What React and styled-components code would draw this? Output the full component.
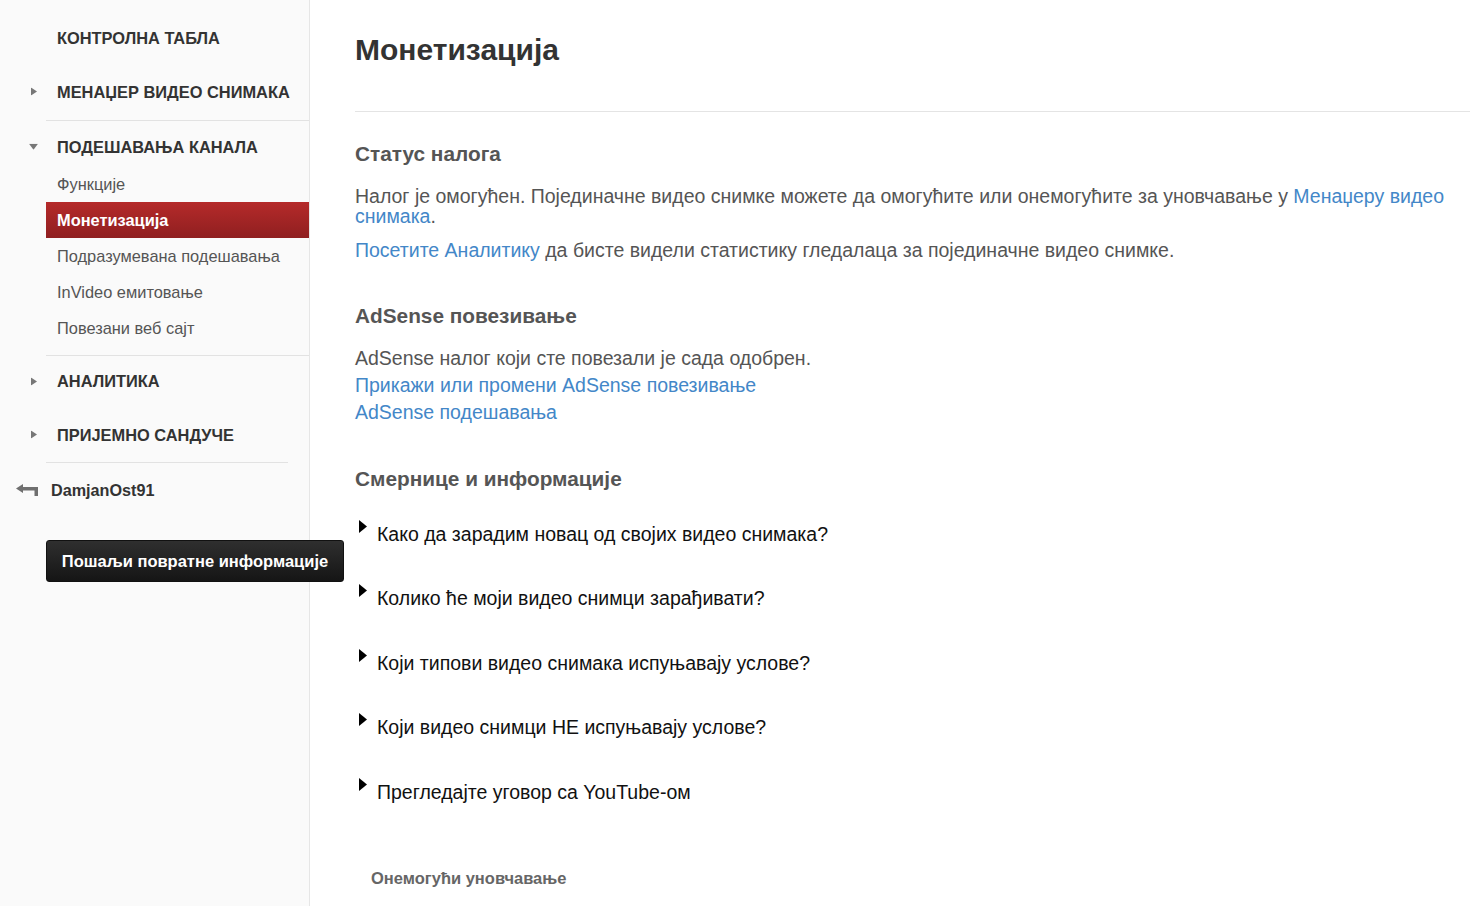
import styled, { createGlobalStyle } from "styled-components";

const GlobalStyle = createGlobalStyle`
  html, body {
    margin: 0;
    padding: 0;
    background: #fff;
    font-family: "Liberation Sans", Arial, sans-serif;
  }
`;

const channelItems = [
  "Функције",
  "Монетизација",
  "Подразумевана подешавања",
  "InVideo емитовање",
  "Повезани веб сајт",
];

const faqs = [
  "Како да зарадим новац од својих видео снимака?",
  "Колико ће моји видео снимци зарађивати?",
  "Који типови видео снимака испуњавају услове?",
  "Који видео снимци НЕ испуњавају услове?",
  "Прегледајте уговор са YouTube-ом",
];

function Arrow({ down }) {
  return down ? (
    <svg width="9" height="6" viewBox="0 0 9 6">
      <path d="M0 0 H9 L4.5 6 Z" fill="#777" />
    </svg>
  ) : (
    <svg width="6" height="8" viewBox="0 0 6 8">
      <path d="M0 0 L6 4 L0 8 Z" fill="#777" />
    </svg>
  );
}

function BackIcon() {
  return (
    <svg width="22" height="12" viewBox="0 0 22 12">
      <path d="M0 4.5 L7 0 V3 H22 V12 H18.5 V6.5 H7 V9 Z" fill="#6f6f6f" />
    </svg>
  );
}

function App() {
  return (
    <Page>
      <GlobalStyle />
      <Sidebar>
        <NavHeader>КОНТРОЛНА ТАБЛА</NavHeader>
        <NavHeader>
          <Caret><Arrow /></Caret>
          МЕНАЏЕР ВИДЕО СНИМАКА
        </NavHeader>
        <Divider />
        <NavHeader $short>
          <Caret><Arrow down /></Caret>
          ПОДЕШАВАЊА КАНАЛА
        </NavHeader>
        {channelItems.map((item) => (
          <SubItem key={item} $active={item === "Монетизација"}>
            {item}
          </SubItem>
        ))}
        <Divider $gap />
        <NavHeader $tight>
          <Caret><Arrow /></Caret>
          АНАЛИТИКА
        </NavHeader>
        <NavHeader>
          <Caret><Arrow /></Caret>
          ПРИЈЕМНО САНДУЧЕ
        </NavHeader>
        <Divider $narrow />
        <UserRow>
          <BackIcon />
          DamjanOst91
        </UserRow>
        <FeedbackButton>Пошаљи повратне информације</FeedbackButton>
      </Sidebar>

      <Main>
        <Title>Монетизација</Title>
        <Rule />

        <SectionTitle>Статус налога</SectionTitle>
        <Paragraph>
          Налог је омогућен. Појединачне видео снимке можете да омогућите или
          онемогућите за уновчавање у <Link>Менаџеру видео снимака</Link>.
        </Paragraph>
        <Paragraph $spaced>
          <Link>Посетите Аналитику</Link> да бисте видели статистику гледалаца
          за појединачне видео снимке.
        </Paragraph>

        <SectionTitle $top>AdSense повезивање</SectionTitle>
        <Lines>
          <div>AdSense налог који сте повезали је сада одобрен.</div>
          <Link as="div">Прикажи или промени AdSense повезивање</Link>
          <Link as="div">AdSense подешавања</Link>
        </Lines>

        <SectionTitle $top $compact>Смернице и информације</SectionTitle>
        <FaqList>
          {faqs.map((q) => (
            <FaqItem key={q}>
              <FaqCaret>
                <svg width="8" height="13" viewBox="0 0 8 13">
                  <path d="M0 0 L8 6.5 L0 13 Z" fill="#000" />
                </svg>
              </FaqCaret>
              {q}
            </FaqItem>
          ))}
        </FaqList>

        <DisableLink>Онемогући уновчавање</DisableLink>
      </Main>
    </Page>
  );
}

const Page = styled.div`
  display: flex;
  min-height: 906px;
  width: 1470px;
  overflow: hidden;
`;

const Sidebar = styled.nav`
  width: 309px;
  flex-shrink: 0;
  background: #fafafa;
  border-right: 1px solid #e6e6e6;
  padding-top: 12px;
  box-sizing: content-box;
`;

const NavHeader = styled.div`
  position: relative;
  height: ${(p) => (p.$short ? "36px" : p.$tight ? "53px" : "54px")};
  margin-top: ${(p) => (p.$short ? "9px" : "0")};
  display: flex;
  align-items: center;
  padding-left: 57px;
  padding-bottom: 2px;
  box-sizing: border-box;
  font-size: 16.4px;
  font-weight: bold;
  color: #333;
`;

const Caret = styled.span`
  position: absolute;
  left: 29px;
  top: 50%;
  transform: translateY(-70%);
  display: flex;
  width: 9px;
  justify-content: center;
`;

const SubItem = styled.div`
  height: 36px;
  display: flex;
  align-items: center;
  margin-left: 46px;
  padding-left: 11px;
  font-size: 16.4px;
  color: ${(p) => (p.$active ? "#fff" : "#555")};
  font-weight: ${(p) => (p.$active ? "bold" : "normal")};
  background: ${(p) =>
    p.$active ? "linear-gradient(#b52a2a, #8f1f20)" : "transparent"};
`;

const Divider = styled.div`
  height: 1px;
  background: #e2e2e2;
  margin-left: 46px;
  margin-right: ${(p) => (p.$narrow ? "21px" : "0")};
  margin-top: ${(p) => (p.$gap ? "9px" : p.$narrow ? "-1px" : "0")};
`;

const UserRow = styled.div`
  height: 54px;
  display: flex;
  align-items: center;
  gap: 13px;
  padding-left: 16px;
  font-size: 16.2px;
  font-weight: bold;
  color: #333;
`;

const FeedbackButton = styled.button`
  margin: 23px 0 0 46px;
  width: 298px;
  height: 42px;
  border: 1px solid #111;
  border-radius: 3px;
  background: linear-gradient(#2f2f2f, #151515);
  color: #fff;
  font-family: "Liberation Sans", Arial, sans-serif;
  font-size: 16.5px;
  font-weight: bold;
  cursor: pointer;
  position: relative;
  z-index: 1;
`;

const Main = styled.main`
  flex: 1;
  padding-left: 45px;
  color: #555;
`;

const Title = styled.h1`
  margin: 33px 0 0;
  font-size: 30px;
  line-height: 34px;
  font-weight: bold;
  color: #333;
`;

const Rule = styled.div`
  height: 1px;
  background: #e4e4e4;
  margin-top: 44px;
`;

const SectionTitle = styled.h2`
  margin: ${(p) => (p.$top ? (p.$compact ? "42px" : "45px") : "31px")} 0 0;
  font-size: 20.8px;
  line-height: 22px;
  font-weight: bold;
  color: #555;
`;

const Paragraph = styled.p`
  margin: ${(p) => (p.$spaced ? "14px" : "21px")} 0 0;
  font-size: 19.5px;
  line-height: 20px;
  color: #555;
`;

const Link = styled.span`
  color: #4387c8;
  cursor: pointer;
`;

const Lines = styled.div`
  margin-top: 18px;
  font-size: 19.5px;
  line-height: 27px;
  color: #555;
`;

const FaqList = styled.div`
  margin-top: 12px;
`;

const FaqItem = styled.div`
  height: 64.5px;
  display: flex;
  align-items: center;
  gap: 10px;
  padding-left: 4px;
  font-size: 19.5px;
  color: #111;
`;

const FaqCaret = styled.span`
  display: flex;
  margin-top: -16px;
`;

const DisableLink = styled.div`
  margin: 44px 0 0 16px;
  font-size: 16.5px;
  line-height: 18px;
  font-weight: bold;
  color: #666;
`;

export default App;
